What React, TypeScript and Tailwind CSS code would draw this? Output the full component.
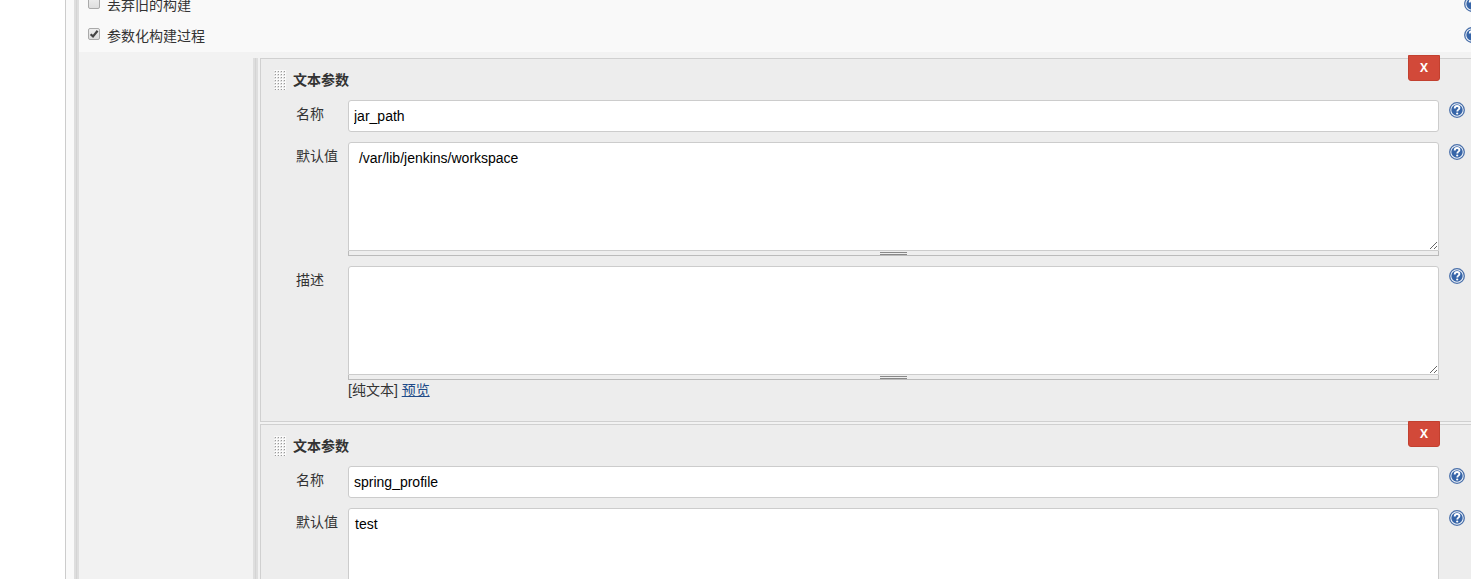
import React, { useState } from "react";

interface TextParam {
  id: string;
  name: string;
  defaultValue: string;
  description: string;
}

const initialParams: TextParam[] = [
  {
    id: "jar",
    name: "jar_path",
    defaultValue: " /var/lib/jenkins/workspace",
    description: "",
  },
  { id: "profile", name: "spring_profile", defaultValue: "test", description: "" },
];

const HelpButton: React.FC<{ topic: string }> = ({ topic }) => (
  <button type="button" aria-label={`帮助: ${topic}`} className="h-4 w-4 shrink-0">
    <svg viewBox="0 0 16 16" className="h-4 w-4">
      <circle cx="8" cy="8" r="7.3" fill="#f4f7fb" stroke="#4a70aa" strokeWidth="1.3" />
      <circle cx="8" cy="8" r="5.7" fill="#3765a8" />
      <path
        d="M5.7 6.4C5.7 4.8 6.7 4 8.1 4s2.3.8 2.3 2c0 1.6-2.1 1.7-2.1 3.4"
        fill="none"
        stroke="#fff"
        strokeWidth="1.9"
      />
      <circle cx="8.2" cy="11.5" r="1.1" fill="#fff" />
    </svg>
  </button>
);

const OptionRow: React.FC<{ id: string; label: string; checked?: boolean }> = ({
  id,
  label,
  checked,
}) => (
  <div className="-mr-[9px] flex h-[31px] items-center pl-[9px]">
    <span className="mb-[3px] grid h-3 w-3">
      <input
        id={id}
        type="checkbox"
        defaultChecked={checked}
        className="peer col-start-1 row-start-1 h-3 w-3 appearance-none rounded-[2px] border border-[#aaa] bg-gradient-to-b from-[#eee] to-[#dedede]"
      />
      <svg
        viewBox="0 0 12 12"
        className="pointer-events-none invisible col-start-1 row-start-1 h-3 w-3 peer-checked:visible"
      >
        <path d="M2.6 6.2 5 8.4 9.6 2.8" fill="none" stroke="#444" strokeWidth="2.2" />
      </svg>
    </span>
    <label htmlFor={id} className="ml-[7px] flex-1">
      {label}
    </label>
    <div className="mb-[2px] flex">
      <HelpButton topic={label} />
    </div>
  </div>
);

const Field: React.FC<{
  id: string;
  label: string;
  children: React.ReactNode;
}> = ({ id, label, children }) => (
  <div className="mt-[10px] flex items-start">
    <label htmlFor={id} className="w-[52px] shrink-0 pt-1">
      {label}
    </label>
    <div className="min-w-0 flex-1">{children}</div>
    <div className="ml-[10px] flex pt-[2px]">
      <HelpButton topic={label} />
    </div>
  </div>
);

const ResizableText: React.FC<{ id: string; value: string }> = ({ id, value }) => (
  <div>
    <textarea
      id={id}
      defaultValue={value}
      className="block h-[109px] w-full resize-y rounded-t-[3px] border border-[#ccc] bg-white px-[6px] py-[5px] text-black outline-none"
    />
    <div className="flex h-[5px] justify-center border-x border-b border-[#bbb] bg-[#eee] pt-px">
      <div className="h-[3px] w-[27px] border-y border-[#888]" />
    </div>
  </div>
);

const ParamCard: React.FC<{ param: TextParam; onRemove: () => void }> = ({
  param,
  onRemove,
}) => (
  <section className="relative border-y border-l border-[#d0d0d0] bg-[#ededed] pt-[11px] pr-[6px] pb-[21px] pl-[35px]">
    <button
      type="button"
      onClick={onRemove}
      className="absolute -top-1 right-[31px] h-[26px] w-8 rounded-b-[3px] border border-[#c2402f] bg-[#d24939] font-['Open_Sans',sans-serif] text-xs font-bold text-white"
    >
      X
    </button>
    <div className="-ml-[22px] flex items-center">
      <svg width="12" height="20" className="cursor-move">
        <defs>
          <pattern id={`grip-${param.id}`} width="3" height="3" patternUnits="userSpaceOnUse">
            <rect width="3" height="3" fill="#fafafa" />
            <rect x="1" y="1" width="1" height="1" fill="#999" />
            <path d="M0 1h1v1h1v1H0z" fill="#e2e2e2" />
          </pattern>
        </defs>
        <rect width="12" height="20" fill={`url(#grip-${param.id})`} />
      </svg>
      <h2 className="ml-[7px] font-bold">文本参数</h2>
    </div>
    <Field id={`${param.id}-name`} label="名称">
      <input
        id={`${param.id}-name`}
        type="text"
        defaultValue={param.name}
        className="block h-8 w-full rounded-[3px] border border-[#ccc] bg-white px-[5px] text-black outline-none"
      />
    </Field>
    <Field id={`${param.id}-default`} label="默认值">
      <ResizableText id={`${param.id}-default`} value={param.defaultValue} />
    </Field>
    <Field id={`${param.id}-desc`} label="描述">
      <ResizableText id={`${param.id}-desc`} value={param.description} />
      <p>
        [纯文本]{" "}
        <a href="#preview" className="text-[#204a87] underline">
          预览
        </a>
      </p>
    </Field>
  </section>
);

const App: React.FC = () => {
  const [params, setParams] = useState(initialParams);

  return (
    <div className="flex h-screen overflow-hidden bg-white pl-[65px] font-['Liberation_Sans','Noto_Sans_CJK_SC',sans-serif] text-sm leading-5 text-[#333]">
      <div className="w-[9px] shrink-0 border-l border-[#ccc] bg-[#f9f9f9]" />
      <div className="w-[5px] shrink-0 border-x-2 border-[#dedede] bg-[#d4d4d4]" />
      <main className="min-w-0 flex-1 bg-[#f2f2f2]">
        <div className="-mt-[11px] bg-[#f9f9f9] pb-px">
          <OptionRow id="discard" label="丢弃旧的构建" />
          <OptionRow id="parameterized" label="参数化构建过程" checked />
        </div>
        <div className="mt-[6px] flex pl-[174px]">
          <div className="w-[5px] shrink-0 border-x-2 border-[#dedede] bg-[#d4d4d4]" />
          <div className="ml-[2px] flex min-w-0 flex-1 flex-col gap-[2px]">
            {params.map((param) => (
              <ParamCard
                key={param.id}
                param={param}
                onRemove={() => setParams(params.filter((p) => p.id !== param.id))}
              />
            ))}
          </div>
        </div>
      </main>
    </div>
  );
};

export default App;
